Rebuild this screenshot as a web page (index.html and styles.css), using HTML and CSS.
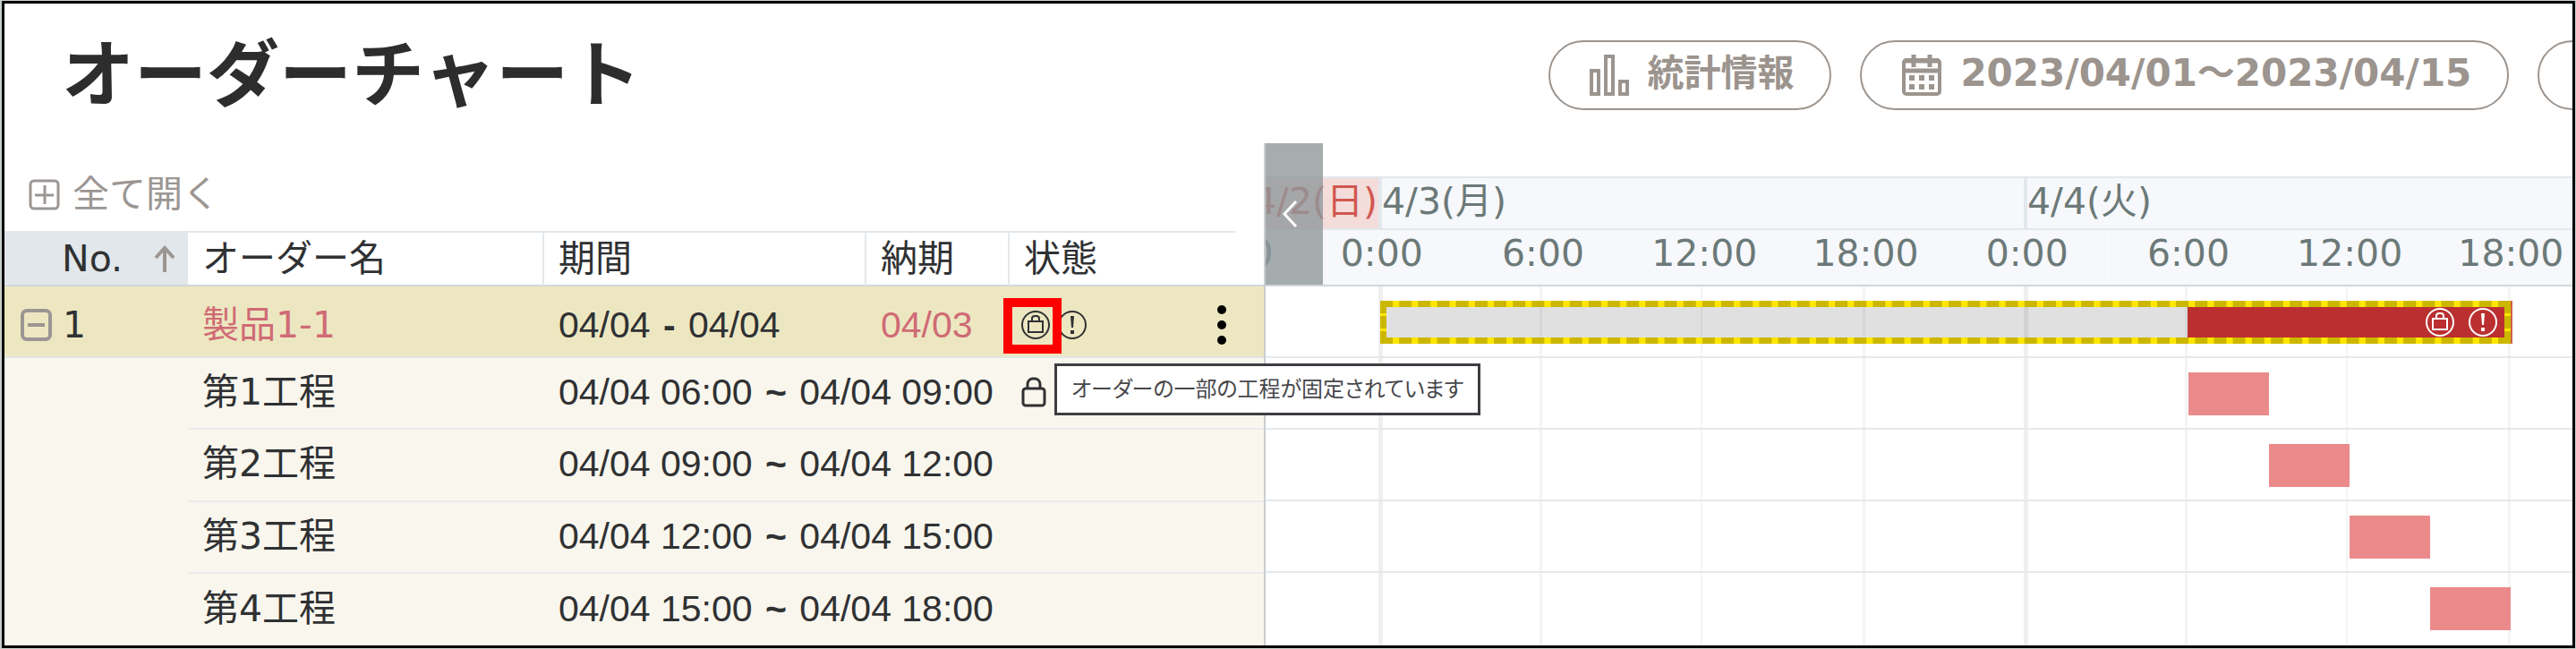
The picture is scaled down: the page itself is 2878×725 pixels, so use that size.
FILE: index.html
```
<!DOCTYPE html>
<html lang="ja">
<head>
  <meta charset="UTF-8">
  <meta name="viewport" content="width=device-width, initial-scale=1">
  <title>オーダーチャート</title>
  <link rel="stylesheet" href="styles.css">
</head>

<body>

  <!-- Shared icons -->
  <svg class="sprite" aria-hidden="true">
    <symbol id="icon-lock-circle" viewBox="0 0 32 32">
      <circle cx="16" cy="16" r="15" fill="none" stroke="currentColor" stroke-width="2"/>
      <rect x="8" y="12" width="16" height="12" fill="none" stroke="currentColor" stroke-width="2"/>
      <path d="M12 12V9a3 3 0 0 1 3-3h2a3 3 0 0 1 3 3v3" fill="none" stroke="currentColor" stroke-width="2"/>
    </symbol>
    <symbol id="icon-alert" viewBox="0 0 32 32">
      <circle cx="16" cy="16" r="15" fill="none" stroke="currentColor" stroke-width="2"/>
      <path d="M14 6h4l-1 13h-2zM14 22h4v4h-4z" fill="currentColor"/>
    </symbol>
    <symbol id="icon-lock" viewBox="0 0 28 34">
      <rect x="2" y="13" width="24" height="19" rx="3" fill="none" stroke="currentColor" stroke-width="3"/>
      <path d="M7 13V8a6 6 0 0 1 6-6h2a6 6 0 0 1 6 6v5" fill="none" stroke="currentColor" stroke-width="3"/>
    </symbol>
  </svg>

  <div class="app">

    <!-- Header -->
    <header class="header">
      <h1 class="title">オーダーチャート</h1>
      <div class="actions">
        <button class="pill">
          <svg width="44" height="46" viewBox="0 0 44 46" fill="none" stroke="currentColor" stroke-width="4">
            <rect x="2" y="18" width="8" height="26"/>
            <rect x="18" y="2" width="8" height="42"/>
            <rect x="34" y="30" width="8" height="14"/>
          </svg>
          <span>統計情報</span>
        </button>
        <button class="pill">
          <svg width="46" height="46" viewBox="0 0 46 46" fill="none" stroke="currentColor" stroke-width="4">
            <rect x="3" y="6" width="40" height="38" rx="3"/>
            <path d="M2 18h42" stroke-width="5"/>
            <path d="M4 7h38" stroke-width="5"/>
            <path d="M14 0v14M32 0v14" stroke-width="5"/>
            <path d="M9 26h6M20 26h6M31 26h6M9 36h6M20 36h6M31 36h6" stroke-width="6"/>
          </svg>
          <span class="range">2023/04/01～2023/04/15</span>
        </button>
        <button class="pill pill-more" aria-label="メニュー"></button>
      </div>
    </header>

    <main class="workspace">

      <!-- Order list -->
      <section class="orders">
        <div class="toolbar">
          <button class="toggle toggle-all">
            <svg width="35" height="35" viewBox="0 0 35 35" fill="none" stroke="currentColor" stroke-width="3">
              <rect x="2" y="2" width="31" height="31" rx="4"/>
              <path d="M7 18h21M18 7v21"/>
            </svg>
            全て開く
          </button>
        </div>

        <table class="order-table">
          <colgroup>
            <col class="col-no">
            <col class="col-name">
            <col class="col-term">
            <col class="col-due">
            <col class="col-status">
          </colgroup>
          <thead>
            <tr>
              <th class="sorted">
                <div class="sort-label">
                  No.
                  <svg width="24" height="30" viewBox="0 0 24 30" fill="none" stroke="currentColor" stroke-width="4">
                    <path d="M12 30V3M2 14L12 3l10 11"/>
                  </svg>
                </div>
              </th>
              <th>オーダー名</th>
              <th>期間</th>
              <th>納期</th>
              <th class="status-head">状態</th>
            </tr>
          </thead>
          <tbody>
            <tr class="order-row">
              <td class="no-cell">
                <div class="no-box">
                  <button class="toggle" aria-label="閉じる">
                    <svg width="35" height="36" viewBox="0 0 35 36" fill="none" stroke="currentColor" stroke-width="4">
                      <rect x="2" y="2" width="31" height="32" rx="5"/>
                      <path d="M8 18h19"/>
                    </svg>
                  </button>
                  1
                </div>
              </td>
              <td class="late">製品1-1</td>
              <td class="date">04/04 <b class="sep">-</b> 04/04</td>
              <td class="date late">04/03</td>
              <td class="status-cell">
                <div class="status">
                  <span class="marked">
                    <svg class="icon"><use href="#icon-lock-circle"/></svg>
                    <span class="tooltip" role="tooltip">オーダーの一部の工程が固定されています</span>
                  </span>
                  <svg class="icon"><use href="#icon-alert"/></svg>
                  <button class="menu" aria-label="操作">
                    <svg width="10" height="44" viewBox="0 0 10 44" fill="currentColor">
                      <circle cx="5" cy="5" r="5"/>
                      <circle cx="5" cy="22" r="5"/>
                      <circle cx="5" cy="39" r="5"/>
                    </svg>
                  </button>
                </div>
              </td>
            </tr>
            <tr>
              <td class="blank" rowspan="4"></td>
              <td>第1工程</td>
              <td class="date" colspan="2">04/04 06:00 <b class="sep">~</b> 04/04 09:00</td>
              <td class="status-cell">
                <div class="status"><svg class="icon-lock"><use href="#icon-lock"/></svg></div>
              </td>
            </tr>
            <tr>
              <td>第2工程</td>
              <td class="date" colspan="2">04/04 09:00 <b class="sep">~</b> 04/04 12:00</td>
              <td></td>
            </tr>
            <tr>
              <td>第3工程</td>
              <td class="date" colspan="2">04/04 12:00 <b class="sep">~</b> 04/04 15:00</td>
              <td></td>
            </tr>
            <tr>
              <td>第4工程</td>
              <td class="date" colspan="2">04/04 15:00 <b class="sep">~</b> 04/04 18:00</td>
              <td></td>
            </tr>
          </tbody>
        </table>
      </section>

      <!-- Timeline -->
      <section class="timeline">
        <button class="collapse" aria-label="一覧を閉じる">
          <svg width="18" height="30" viewBox="0 0 18 30" fill="none" stroke="currentColor" stroke-width="3">
            <path d="M16 1L3 15l13 14"/>
          </svg>
        </button>

        <div class="days">
          <div class="day holiday">4/2(日)</div>
          <div class="day">4/3(月)</div>
          <div class="day">4/4(火)</div>
        </div>
        <div class="hours">
          <span>18:00</span>
          <span>0:00</span>
          <span>6:00</span>
          <span>12:00</span>
          <span>18:00</span>
          <span>0:00</span>
          <span>6:00</span>
          <span>12:00</span>
          <span>18:00</span>
        </div>

        <div class="tracks">
          <div class="track">
            <div class="order-bar" style="left: 128px; width: 1263px">
              <div class="work" style="width: 354px">
                <svg class="icon"><use href="#icon-lock-circle"/></svg>
                <svg class="icon"><use href="#icon-alert"/></svg>
              </div>
            </div>
          </div>
          <div class="track"><div class="bar" style="left: 1031px; width: 90px"></div></div>
          <div class="track"><div class="bar" style="left: 1121px; width: 90px"></div></div>
          <div class="track"><div class="bar" style="left: 1211px; width: 90px"></div></div>
          <div class="track"><div class="bar" style="left: 1301px; width: 90px"></div></div>
        </div>
      </section>

    </main>
  </div>

</body>
</html>
```
FILE: styles.css
```
*,
*::before {
  box-sizing: border-box;
}

body {
  margin: 0;
  padding: 1px 1px 1px 2px;
  min-height: 100vh;
  display: flex;
  background: #c8d0cc;
  color: #2f3133;
  font-family: "DejaVu Sans", "Noto Sans CJK JP", sans-serif;
  font-size: 41px;
  line-height: 56px;
}

button {
  padding: 0;
  border: none;
  background: none;
  color: inherit;
  font: inherit;
  cursor: pointer;
}

svg {
  display: block;
  flex: none;
}

.sprite {
  position: absolute;
  width: 0;
  height: 0;
}

.app {
  flex: 1;
  min-width: 0;
  display: flex;
  flex-direction: column;
  overflow: hidden;
  border: 3px solid #000;
  background: #fff;
}

/* Header */
.header {
  display: flex;
  align-items: center;
  height: 156px;
  padding-top: 4px;
}

.title {
  flex: 0 0 60%;
  margin: 0;
  padding-left: 64px;
  font-size: 81px;
  line-height: 96px;
  color: #2d2d2d;
}

.actions {
  display: flex;
  gap: 32px;
  padding-left: 4px;
}

.pill {
  display: flex;
  align-items: center;
  gap: 20px;
  height: 78px;
  padding: 0 40px 0 44px;
  border: 2px solid #9c948e;
  border-radius: 40px;
  color: #9c948e;
  font-weight: bold;
  white-space: nowrap;
}

.pill span {
  padding-bottom: 4px;
}

.pill .range {
  font-size: 42px;
}

.pill-more {
  width: 240px;
}

/* Order list */
.workspace {
  flex: 1;
  display: flex;
}

.orders {
  flex: none;
  width: 1409px;
  display: flex;
  flex-direction: column;
  border-right: 2px solid #c9cdd0;
}

.toolbar {
  display: flex;
  align-items: center;
  height: 100px;
  margin-right: 32px;
  padding: 16px 0 0 27px;
  border-bottom: 2px solid #e3e8ec;
}

.toggle {
  color: #9b9693;
}

.toggle-all {
  display: flex;
  align-items: center;
  gap: 14px;
}

.order-table {
  width: 100%;
  flex: 1;
  table-layout: fixed;
  border-collapse: separate;
  border-spacing: 0;
  background: #f9f6ed;
}

.col-no { width: 205px; }
.col-name { width: 398px; }
.col-term { width: 360px; }
.col-due { width: 160px; }

.order-table th {
  height: 60px;
  padding: 0 0 0 16px;
  border-right: 2px solid #e3e8ec;
  border-bottom: 2px solid #d3d7da;
  background: #fff;
  font-weight: normal;
  text-align: left;
}

.order-table .sorted {
  padding: 0 14px 0 64px;
  border-right: none;
  background: #e2e7eb;
}

.order-table .status-head {
  border-right: none;
}

.sort-label {
  display: flex;
  align-items: center;
  justify-content: space-between;
}

.sort-label svg {
  color: #9b9693;
}

.order-table td {
  height: 80px;
  padding: 0 0 2px 16px;
  border-bottom: 2px solid #e9ecee;
  white-space: nowrap;
}

.order-table tr:last-child td,
.order-table .blank {
  border-bottom: none;
}

.order-table .order-row td {
  padding-top: 8px;
  padding-bottom: 0;
  background: #ede7c1;
  border-bottom-color: #e1e5e6;
}

.order-table .no-cell {
  padding-left: 18px;
}

.no-box {
  display: flex;
  align-items: center;
  gap: 12px;
}

.order-table .late {
  color: #cf6b75;
}

.date {
  font-family: "Liberation Sans", sans-serif;
}

.sep {
  margin: 0 3px;
}

.order-table .status-cell {
  padding-left: 13px;
}

.status {
  display: flex;
  align-items: center;
  gap: 9px;
}

.icon {
  width: 32px;
  height: 32px;
}

.icon-lock {
  width: 28px;
  height: 34px;
}

.menu {
  margin: 0 42px 0 auto;
  color: #000;
}

.marked {
  position: relative;
}

/* red frame around the lock icon */
.marked::before {
  content: "";
  position: absolute;
  top: -14px;
  left: -20px;
  z-index: 1;
  width: 65px;
  height: 62px;
  border: 10px solid #f00;
}

.tooltip {
  position: absolute;
  top: 59px;
  left: 37px;
  z-index: 2;
  padding: 8px 16px;
  border: 3px solid #3d3d42;
  background: #fff;
  color: #47474b;
  font-size: 24px;
  line-height: 36px;
  font-feature-settings: "palt";
}

/* Timeline */
.timeline {
  flex: 1;
  position: relative;
  min-width: 0;
  padding-top: 37px;
  display: flex;
  flex-direction: column;
  overflow: hidden;
  color: #6c7978;
  line-height: 52px;
}

.collapse {
  position: absolute;
  top: 0;
  left: 0;
  z-index: 1;
  width: 64px;
  height: 158px;
  padding-right: 10px;
  display: flex;
  align-items: center;
  justify-content: center;
  background: rgba(144, 153, 155, 0.8);
  color: #fff;
}

.days {
  display: flex;
  height: 60px;
  border-top: 2px solid #e3e8ec;
  border-bottom: 2px solid #e3e8ec;
  background: #f6f8fb;
}

.day {
  flex: none;
  width: 721px;
  border-left: 4px solid #e3e8ec;
  white-space: nowrap;
}

.holiday {
  width: 146px;
  margin-left: -20px;
  padding-left: 6px;
  border-left: none;
  background: #f3dcda;
  color: #d0574f;
}

.hours {
  display: grid;
  grid-template-columns: repeat(9, 1fr);
  flex: none;
  width: 1622px;
  height: 63px;
  margin-left: -140px;
  border-bottom: 2px solid #d3d7da;
  background: #f6f8fb;
  text-align: center;
}

.hours span {
  border-right: 1px solid #fafbfc;
}

/* one day is 721px wide, with a line every six hours */
.tracks {
  flex: 1;
  background: linear-gradient(to right,
    #efefef 0 5px, transparent 5px 180px,
    #f4f4f4 180px 183px, transparent 183px 360px,
    #f4f4f4 360px 362px, transparent 362px 541px,
    #f4f4f4 541px 544px, transparent 544px) 126px 0 / 721px 100%;
}

.track {
  position: relative;
  height: 80px;
  border-bottom: 2px solid #e4e9ed;
}

.track:last-child {
  border-bottom: none;
}

.bar {
  position: absolute;
  top: 16px;
  height: 48px;
  background: #eb8a8a;
}

.order-bar {
  position: absolute;
  top: 16px;
  height: 48px;
  display: flex;
  justify-content: flex-end;
  border: 7px solid #ffe600;
  background: rgba(0, 0, 0, 0.12);
  background-clip: padding-box;
  box-shadow: 2px 0 0 #d0604a;
}

.order-bar::before {
  content: "";
  position: absolute;
  inset: -7px;
  border: 7px dashed #ccb700;
}

.work {
  display: flex;
  align-items: center;
  justify-content: flex-end;
  gap: 16px;
  padding-right: 8px;
  background: #bb2f31;
  color: #fff;
}
```
